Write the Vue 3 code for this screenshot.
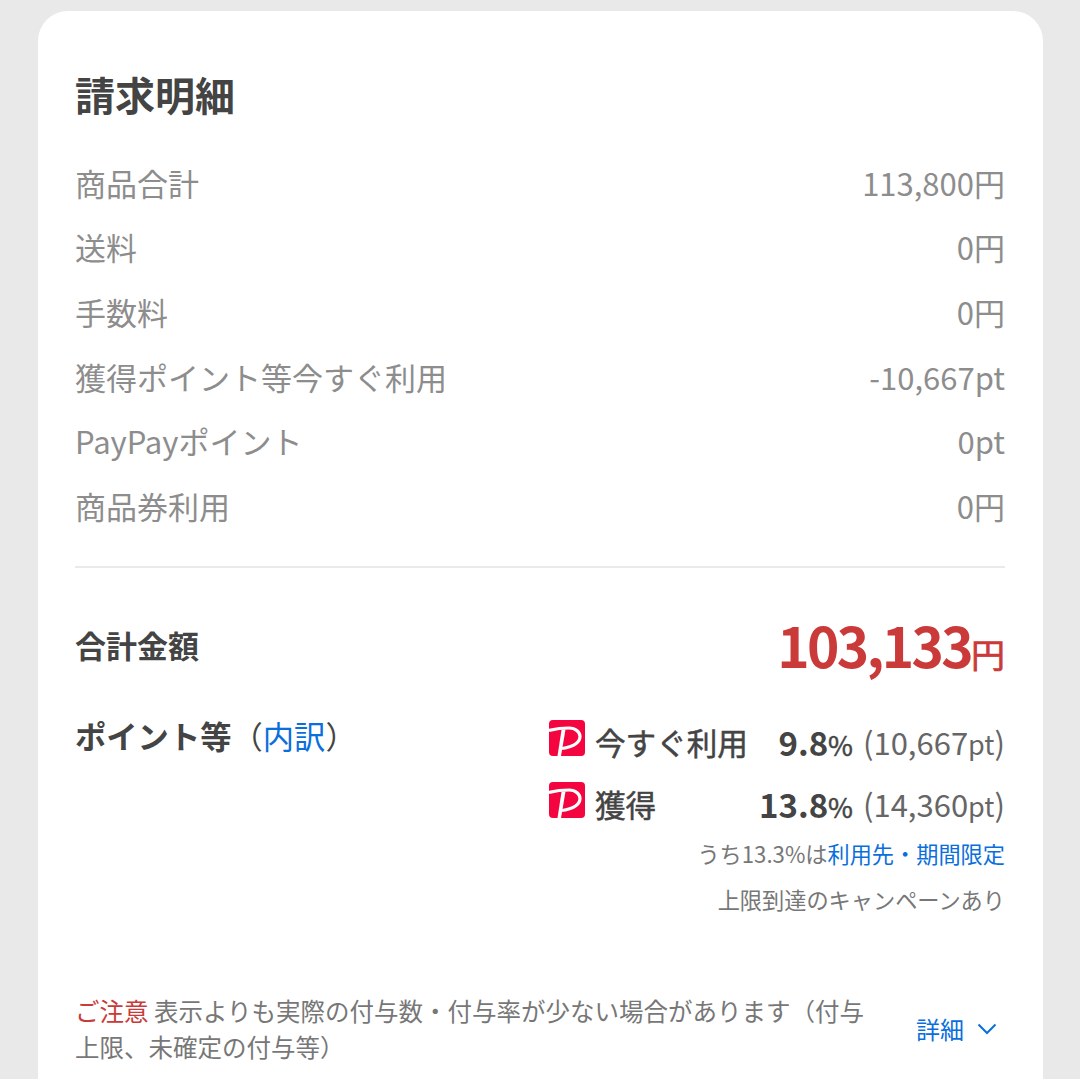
<script setup>
const rows = [
  { label: '商品合計', value: '113,800円' },
  { label: '送料', value: '0円' },
  { label: '手数料', value: '0円' },
  { label: '獲得ポイント等今すぐ利用', value: '-10,667pt' },
  { label: 'PayPayポイント', value: '0pt' },
  { label: '商品券利用', value: '0円' },
]

const points = [
  { label: '今すぐ利用', rate: '9.8', amount: '10,667' },
  { label: '獲得', rate: '13.8', amount: '14,360' },
]
</script>

<template>
  <div class="page">
    <section class="card">
      <h2 class="title">請求明細</h2>

      <dl class="rows">
        <div v-for="row in rows" :key="row.label" class="row">
          <dt>{{ row.label }}</dt>
          <dd>{{ row.value }}</dd>
        </div>
      </dl>

      <div class="total">
        <span class="total-label">合計金額</span>
        <span class="total-price">103,133<small>円</small></span>
      </div>

      <div class="points">
        <div class="points-label">ポイント等<span class="paren">（<a>内訳</a>）</span></div>
        <div class="points-body">
          <div v-for="item in points" :key="item.label" class="point-row">
            <svg class="pp-icon" viewBox="0 0 36 36" aria-hidden="true">
              <rect width="36" height="36" rx="4" fill="#f5053f" />
              <path d="M0 10.5 C8 8.5 14 8 20 8 C27 8 31 12.5 31 16.5 C31 22.5 25 26.5 13 28.5" fill="none" stroke="#fff" stroke-width="3.2" />
              <path d="M12.5 10 L16.5 9.5 L12 36 L8.5 36 Z" fill="#fff" />
            </svg>
            <span class="point-name">{{ item.label }}</span>
            <span class="point-rate">{{ item.rate }}<small>%</small></span>
            <span class="point-amount">({{ item.amount }}<small>pt</small>)</span>
          </div>
          <p class="note first">うち13.3%は<a>利用先・期間限定</a></p>
          <p class="note">上限到達のキャンペーンあり</p>
        </div>
      </div>

      <div class="notice">
        <p><em>ご注意</em><span> 表示よりも実際の付与数・付与率が少ない場合があります（付与上限、未確定の付与等）</span></p>
        <a class="detail">
          詳細
          <svg viewBox="0 0 20 12" class="chevron" aria-hidden="true">
            <path d="M1.5 1.5 L10 10 L18.5 1.5" fill="none" stroke="currentColor" stroke-width="2" />
          </svg>
        </a>
      </div>
    </section>
  </div>
</template>

<style>
html,
body {
  margin: 0;
  background: #e9e9e9;
}
</style>

<style scoped>
.page {
  height: 1079px;
  overflow: hidden;
  padding: 11px 37px 0 38px;
  box-sizing: border-box;
  font-family: "Noto Sans CJK JP", "Noto Sans", sans-serif;
  color: #444;
}

.card {
  height: 1068px;
  box-sizing: border-box;
  padding: 56px 38px 0 37px;
  background: #fff;
  border-radius: 30px 30px 0 0;
}

.title {
  margin: 0;
  font-size: 40px;
  line-height: 54px;
  font-weight: 700;
  color: #444;
}

.rows {
  margin: 29px 0 0;
  padding-bottom: 28px;
  border-bottom: 2px solid #eaeaea;
}

.row {
  display: flex;
  justify-content: space-between;
  height: 64.6px;
  align-items: center;
  font-size: 31px;
  color: #8d8d8d;
}

.row dt,
.row dd {
  margin: 0;
}

.total {
  display: flex;
  justify-content: space-between;
  align-items: center;
  margin-top: 32px;
}

.total-label {
  font-size: 31px;
  font-weight: 700;
}

.total-price {
  padding-top: 8px;
  font-size: 55px;
  line-height: 72px;
  font-weight: 700;
  color: #c93a39;
  letter-spacing: -2.7px;
}

.total-price small {
  font-size: 34px;
  font-weight: 400;
  letter-spacing: 0;
  -webkit-text-stroke: 0.7px #c93a39;
}

.points {
  display: flex;
  justify-content: space-between;
  margin-top: 23px;
}

.points-label {
  font-size: 31.3px;
  font-weight: 700;
  line-height: 46px;
}

.paren {
  font-weight: 400;
}

a {
  color: #0a6fdc;
}

.points-body {
  width: 456px;
  margin-top: -2px;
}

.point-row {
  display: flex;
  align-items: center;
  height: 62px;
}

.pp-icon {
  width: 36px;
  height: 36px;
  flex: none;
  margin: 0 10px 8px 0;
}

.point-name {
  font-size: 30.6px;
  width: 150px;
  white-space: nowrap;
  -webkit-text-stroke: 0.5px #444;
}

.point-rate {
  margin-left: auto;
  font-size: 33px;
  font-weight: 700;
}

.point-rate small {
  font-size: 27px;
  font-weight: 400;
  -webkit-text-stroke: 0.5px #444;
}

.point-amount {
  margin-left: 10px;
  font-size: 31px;
  color: #666;
}

.point-amount small {
  font-size: 27px;
}

.note {
  margin: 0;
  text-align: right;
  font-size: 22.2px;
  line-height: 46px;
  color: #777;
}

.note.first {
  margin-top: -5px;
}

.notice {
  display: flex;
  justify-content: space-between;
  align-items: center;
  margin-top: 71px;
}

.notice p {
  margin: 0;
  width: 800px;
  font-size: 24.5px;
  line-height: 36px;
  color: #777;
}

.notice em {
  font-style: normal;
  color: #c93a39;
}

.detail {
  display: flex;
  align-items: center;
  gap: 13px;
  font-size: 24px;
  padding-right: 8px;
}

.chevron {
  width: 20px;
  height: 12px;
}
</style>
